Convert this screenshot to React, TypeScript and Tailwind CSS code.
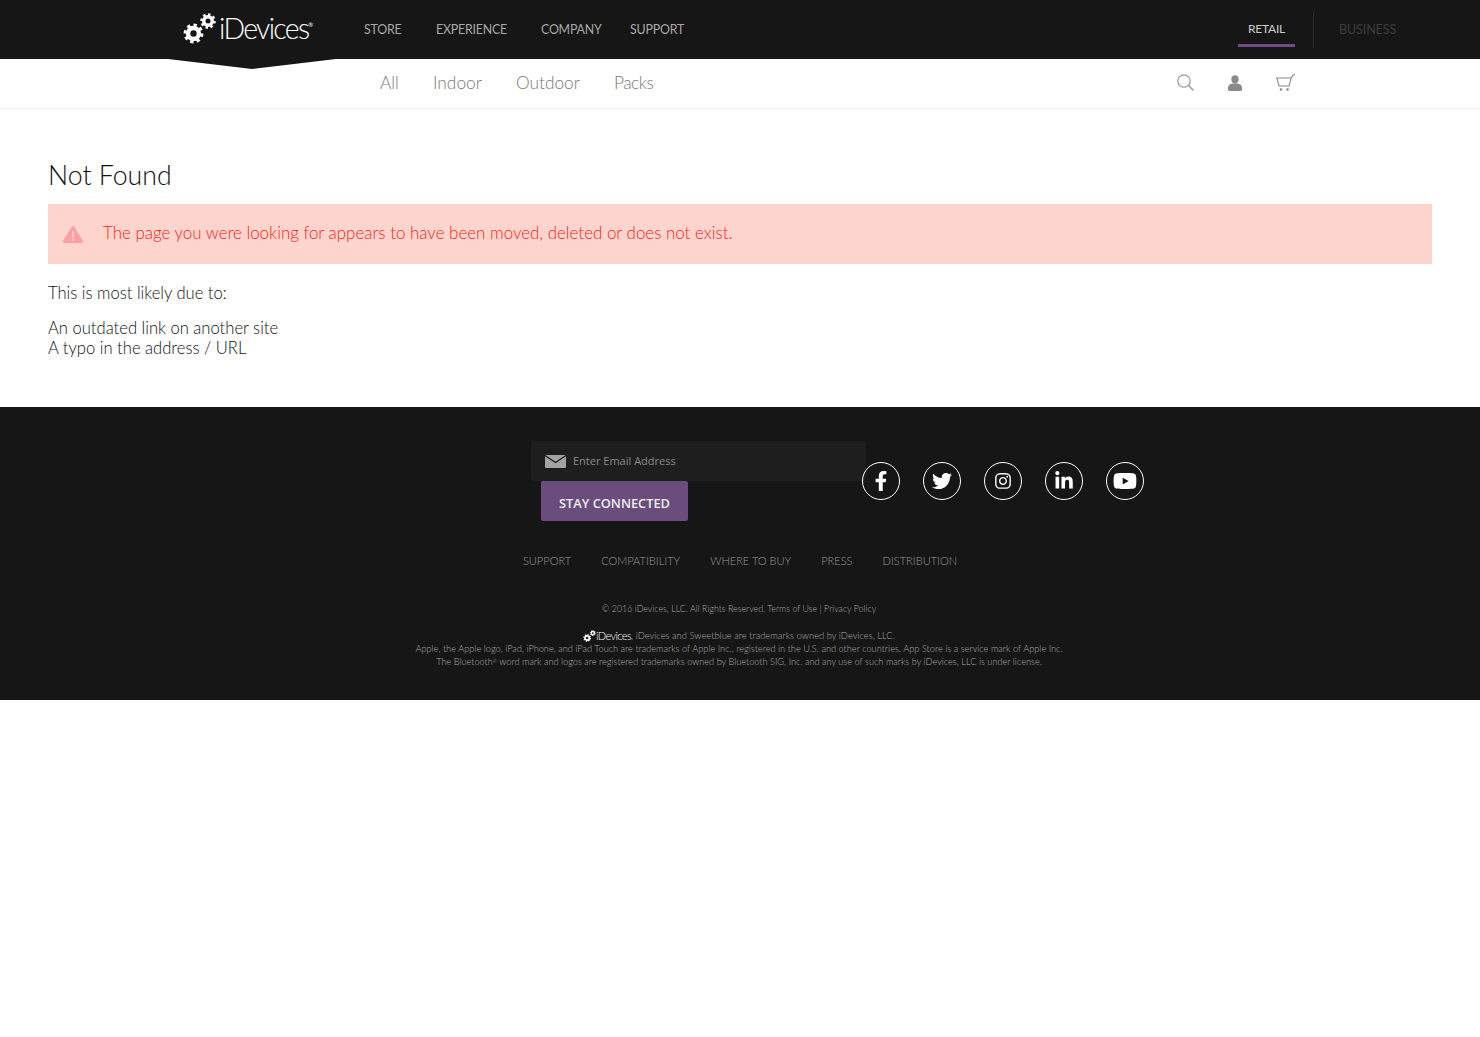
import { FaFacebookF, FaInstagram, FaLinkedinIn, FaTwitter, FaYoutube } from "react-icons/fa";

const font = "font-['Lato','Noto_Sans',sans-serif]";

// little gear: solid ring plus a dashed ring for the teeth
function Gear({ cx, cy, r }: { cx: number; cy: number; r: number }) {
  return (
    <g fill="none" stroke="#fff">
      <circle cx={cx} cy={cy} r={r * 0.85} strokeWidth={r * 0.7} />
      <circle cx={cx} cy={cy} r={r * 1.3} strokeWidth={r * 0.5} pathLength={16} strokeDasharray="1 1" />
    </g>
  );
}

function Gears({ className }: { className: string }) {
  return (
    <svg viewBox="0 0 33 31" className={className}>
      <Gear cx={10.5} cy={20.5} r={6.4} />
      <Gear cx={25} cy={8} r={5} />
    </svg>
  );
}

function Logo() {
  return (
    <div className="flex items-center">
      <Gears className="h-[31px] w-[33px]" />
      <span className="ml-[3px] mt-[1px] text-[28.500px] leading-none font-light tracking-[-1.700px] text-white">iDevices</span>
      <span className="mb-2 text-[6px] text-white">®</span>
    </div>
  );
}

const socials = [FaFacebookF, FaTwitter, FaInstagram, FaLinkedinIn, FaYoutube];
const footerLinks = ["SUPPORT", "COMPATIBILITY", "WHERE TO BUY", "PRESS", "DISTRIBUTION"];

export default function App() {
  return (
    <div className={`${font} min-h-[1037px] bg-white text-[#111]`}>
      {/* top bar */}
      <header className="relative flex h-[59px] items-center bg-[#161616] pl-[183px] pr-[84px]">
        <div className="mt-[-3px] w-[181px]">
          <Logo />
        </div>
        <nav className="mt-[1px] flex text-[12.400px] tracking-[-0.2px] text-[#a8a8a8]">
          <a className="w-[72px]">STORE</a>
          <a className="w-[105px]">EXPERIENCE</a>
          <a className="w-[89px]">COMPANY</a>
          <a>SUPPORT</a>
        </nav>
        <div className="ml-auto flex items-center">
          <a className="mt-[-2px] flex h-[36px] w-[57px] items-center justify-center border-b-[3px] border-[#6a4c7d] pt-[3px] text-[12px] tracking-[-0.2px] text-[#ccc]">
            RETAIL
          </a>
          <div className="ml-[18px] mr-[25px] h-[36px] w-px bg-[#2c2c2c]" />
          <a className="mt-[1px] w-[57px] text-[12.500px] tracking-[-0.1px] text-[#3c3c3c]">BUSINESS</a>
        </div>
        <div className="absolute left-[168px] top-[59px] h-[10px] w-[168px] bg-[#161616] [clip-path:polygon(0_0,100%_0,50%_100%)]" />
      </header>

      {/* sub nav */}
      <div className="flex h-[50px] items-center border-b border-[#eee] pl-[380px] pr-[185px] text-[17.300px] font-light text-[#777]">
        <a className="mt-[-1px] w-[53px]">All</a>
        <a className="mt-[-1px] w-[83px]">Indoor</a>
        <a className="mt-[-1px] w-[98px]">Outdoor</a>
        <a className="mt-[-1px] tracking-[-0.5px]">Packs</a>
        <div className="ml-auto mt-[-2px] flex items-center gap-[33px]">
          <svg viewBox="0 0 17 17" className="h-[17px] w-[17px]" fill="none" stroke="#999">
            <circle cx="7" cy="7" r="6.200" strokeWidth="1.200" />
            <path d="M11.500 11.500L16.500 16.500" strokeWidth="1.500" />
          </svg>
          <svg viewBox="0 0 15 17" className="h-[16px] w-[16px]" fill="#8a8a8a">
            <ellipse cx="7.500" cy="4.600" rx="3.900" ry="4.400" />
            <path d="M0 14c0-3.400 2.600-4.600 5-5h5c2.400.4 5 1.600 5 5v1.500c0 .8-.7 1.500-1.500 1.500h-12C.7 17 0 16.300 0 15.500z" />
          </svg>
          <svg viewBox="0 0 19 17" className="h-[17px] w-[19px]" fill="none" stroke="#8a8a8a" strokeWidth="1.100">
            <path d="M0 4h15M1 4.500l2 7.500h10L15.500 3L18.800 0" />
            <circle cx="5" cy="15.500" r="1.300" fill="#8a8a8a" stroke="none" />
            <circle cx="11.500" cy="15.500" r="1.300" fill="#8a8a8a" stroke="none" />
          </svg>
        </div>
      </div>

      {/* content */}
      <main className="h-[298px] px-12 pt-[48px]">
        <h1 className="text-[26.700px] leading-[36px] font-light text-[#111]">Not Found</h1>
        <div className="mt-[11px] flex h-[60px] items-center bg-[#fed5cc] pl-[15px] text-[#ff2020]">
          <svg viewBox="0 0 20 17" className="h-[17px] w-[20px]">
            <path d="M10 0c.6 0 1.100.3 1.400.8l8.400 14c.5 1-.1 2.200-1.300 2.200H1.500C.3 17-.3 15.800.2 14.800L8.600.8C8.900.3 9.400 0 10 0z" fill="#ff9ea3" />
            <rect x="9" y="5" width="2" height="6.500" fill="#fed5cc" />
            <rect x="9" y="12.800" width="2" height="2" fill="#fed5cc" />
          </svg>
          <p className="mb-[2px] ml-5 text-[16.950px] font-light">The page you were looking for appears to have been moved, deleted or does not exist.</p>
        </div>
        <p className="mt-[19px] text-[16.600px] leading-5 font-light">This is most likely due to:</p>
        <p className="mt-[15px] text-[16.600px] leading-5 font-light">
          An outdated link on another site
          <br />A typo in the address / URL
        </p>
      </main>

      {/* footer */}
      <footer className="h-[293px] bg-[#161616] pt-[34px]">
        <div className="flex pl-[531px]">
          <div className="w-[335px]">
            <div className="flex h-10 items-center rounded-[3px] bg-[#1e1e1e] pl-[14px]">
              <svg viewBox="0 0 21 13" className="h-[13px] w-[21px]">
                <rect width="21" height="13" rx="1" fill="#a3a3a3" />
                <path d="M0 .5l10.500 7 10.500-7" fill="none" stroke="#1e1e1e" strokeWidth="1.300" />
              </svg>
              <span className="ml-[7px] font-['Open_Sans',sans-serif] text-[11px] text-[#8a8a8a]">Enter Email Address</span>
            </div>
            <button className="ml-[10px] flex h-10 w-[147px] items-center justify-center rounded-[2px] bg-[#6a4c7d] pt-[5px] font-['Open_Sans',sans-serif] text-[12.800px] font-semibold text-[#eee]">
              STAY CONNECTED
            </button>
          </div>
          <div className="ml-[-4px] mt-[21px] flex h-[38px] gap-[23px]">
            {socials.map((Icon, i) => (
              <a key={i} className="flex h-[38px] w-[38px] items-center justify-center rounded-full border border-white text-white">
                <Icon className={i === 4 ? "text-[24px]" : i === 2 ? "text-[18px]" : "text-[20px]"} />
              </a>
            ))}
          </div>
        </div>

        <div className="mt-[33px] flex justify-center gap-[30px] text-[11.050px] leading-[14px] font-light text-[#999]">
          {footerLinks.map((l) => (
            <a key={l}>{l}</a>
          ))}
        </div>

        <div className="mt-[34px] pr-[2px] text-center leading-[13px] font-light text-[#aaa]">
          <p className="text-[8.880px]">© 2016 iDevices, LLC. All Rights Reserved. Terms of Use | Privacy Policy</p>
          <p className="mt-[14px] flex items-center justify-center text-[9.380px]">
            <Gears className="h-[12px] w-[13px]" />
            <span className="text-[11px] leading-[13px] tracking-[-0.600px] text-white">iDevices</span>
            <span>, iDevices and Sweetblue are trademarks owned by iDevices, LLC.</span>
          </p>
          <p className="text-[9.220px]">Apple, the Apple logo, iPad, iPhone, and iPad Touch are trademarks of Apple Inc., registered in the U.S. and other countries. App Store is a service mark of Apple Inc.</p>
          <p className="text-[9.200px]">
            The Bluetooth<sup className="text-[5px]">®</sup> word mark and logos are registered trademarks owned by Bluetooth SIG, Inc. and any use of such marks by iDevices, LLC is under license.
          </p>
        </div>
      </footer>
    </div>
  );
}
